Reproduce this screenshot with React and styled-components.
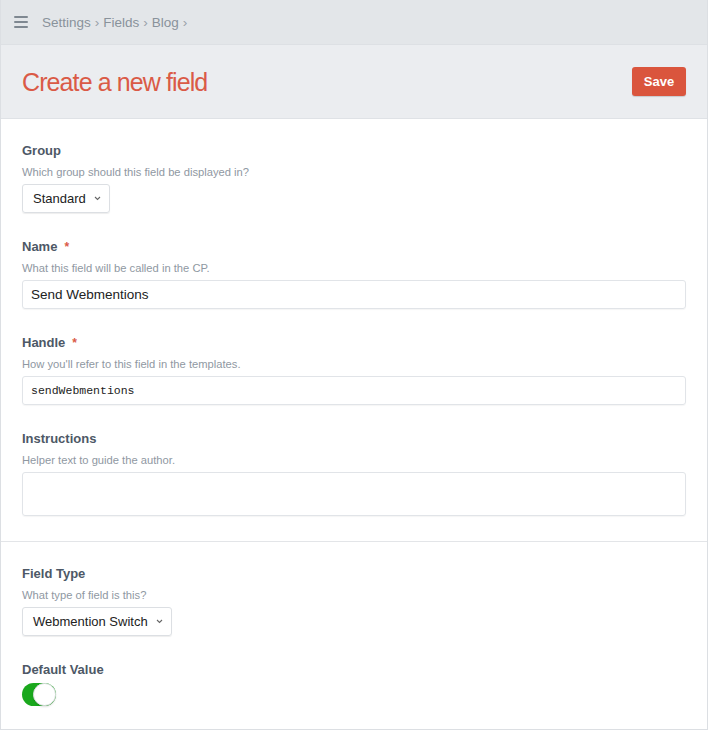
import React from 'react'
import styled, { createGlobalStyle } from 'styled-components'

const GlobalStyle = createGlobalStyle`
  body {
    margin: 0;
    background: #fff;
    font-family: "Liberation Sans", Helvetica, Arial, sans-serif;
  }
`

const Frame = styled.div`
  width: 708px;
  min-height: 730px;
  box-sizing: border-box;
  border: 1px solid #dcdfe3;
  border-top: none;
  background: #fff;
`

const Crumbs = styled.div`
  height: 44px;
  display: flex;
  align-items: center;
  padding-left: 13px;
  background: #e3e6e9;
  border-bottom: 1px solid #dde0e4;
  color: #89929b;
  font-size: 13.5px;
`

const Burger = styled.div`
  width: 14px;
  display: flex;
  flex-direction: column;
  gap: 3px;
  margin-right: 14px;
  span {
    height: 2px;
    background: #7f8891;
    border-radius: 1px;
  }
`

const Sep = styled.span`
  margin: 0 4px;
  color: #9aa2aa;
`

const TitleBar = styled.div`
  height: 74px;
  display: flex;
  align-items: center;
  justify-content: space-between;
  padding: 2px 21px 0 21px;
  box-sizing: border-box;
  background: #ebedf0;
  border-bottom: 1px solid #dfe2e6;
`

const Title = styled.h1`
  margin: 0;
  font-size: 25px;
  font-weight: normal;
  letter-spacing: -0.9px;
  color: #da5a46;
`

const SaveButton = styled.button`
  width: 54px;
  height: 29px;
  margin-bottom: 2px;
  border: none;
  border-radius: 3px;
  background: #da553d;
  color: #fff;
  font-family: inherit;
  font-size: 13px;
  font-weight: bold;
  box-shadow: 0 1px 1px rgba(0, 0, 0, 0.15);
`

const Section = styled.div`
  padding: 23px 21px ${p => (p.$divider ? '25px' : '22px')};
  border-bottom: ${p => (p.$divider ? '1px solid #e3e5e8' : 'none')};
`

const Field = styled.div`
  margin-bottom: 25px;
  &:last-child {
    margin-bottom: 0;
  }
`

const Label = styled.div`
  font-size: 13px;
  font-weight: bold;
  line-height: 18px;
  color: #4d5866;
`

const Required = styled.span`
  margin-left: 7px;
  color: #da5a46;
  font-size: 12px;
`

const Help = styled.div`
  margin: 3px 0;
  font-size: 11.2px;
  line-height: 18px;
  color: #8f98a2;
`

const Input = styled.div`
  height: ${p => p.$tall ? '44px' : '29px'};
  box-sizing: border-box;
  display: flex;
  align-items: center;
  padding: 0 8px;
  border: 1px solid #e1e4e8;
  border-radius: 3px;
  box-shadow: 0 1px 1px rgba(0, 0, 0, 0.04);
  font-family: ${p => p.$mono ? '"Liberation Mono", monospace' : 'inherit'};
  font-size: ${p => p.$mono ? '11.5px' : '13.5px'};
  color: #222;
`

const Select = styled.div`
  display: inline-flex;
  align-items: center;
  gap: 8px;
  height: 29px;
  box-sizing: border-box;
  padding: 0 8px 0 10px;
  border: 1px solid #dcdfe3;
  border-radius: 3px;
  box-shadow: 0 1px 1px rgba(0, 0, 0, 0.07);
  font-size: 13px;
  color: #222;
`

const Toggle = styled.div`
  margin-top: 4px;
  width: 34px;
  height: 23px;
  border-radius: 12px;
  background: #1aa81d;
  position: relative;
  &::after {
    content: '';
    position: absolute;
    right: 0;
    top: 0;
    width: 21px;
    height: 21px;
    border-radius: 50%;
    background: #fff;
    border: 1px solid #dfe1e4;
    box-shadow: 0 1px 2px rgba(0, 0, 0, 0.12);
  }
`

const Chevron = () => (
  <svg width="7" height="5" viewBox="0 0 7 5">
    <polyline points="1,1 3.5,3.5 6,1" fill="none" stroke="#666" strokeWidth="1.1" />
  </svg>
)

const App = () => {
  return (
    <Frame>
      <GlobalStyle />
      <Crumbs>
        <Burger><span /><span /><span /></Burger>
        Settings<Sep>›</Sep>Fields<Sep>›</Sep>Blog<Sep>›</Sep>
      </Crumbs>
      <TitleBar>
        <Title>Create a new field</Title>
        <SaveButton>Save</SaveButton>
      </TitleBar>

      <Section $divider>
        <Field>
          <Label>Group</Label>
          <Help>Which group should this field be displayed in?</Help>
          <Select>Standard <Chevron /></Select>
        </Field>
        <Field>
          <Label>Name<Required>*</Required></Label>
          <Help>What this field will be called in the CP.</Help>
          <Input>Send Webmentions</Input>
        </Field>
        <Field>
          <Label>Handle<Required>*</Required></Label>
          <Help>How you'll refer to this field in the templates.</Help>
          <Input $mono>sendWebmentions</Input>
        </Field>
        <Field>
          <Label>Instructions</Label>
          <Help>Helper text to guide the author.</Help>
          <Input $tall />
        </Field>
      </Section>

      <Section>
        <Field>
          <Label>Field Type</Label>
          <Help>What type of field is this?</Help>
          <Select>Webmention Switch <Chevron /></Select>
        </Field>
        <Field>
          <Label>Default Value</Label>
          <Toggle />
        </Field>
      </Section>
    </Frame>
  )
}

export default App
